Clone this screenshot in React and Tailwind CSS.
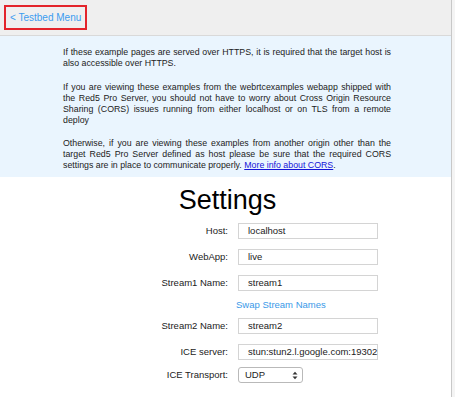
import React from "react";

const font = { fontFamily: '"Liberation Sans", Arial, sans-serif' };

function Row({ label, children }) {
  return (
    <div className="flex items-center h-[16px]">
      <div className="w-[238px] pr-[10px] text-right text-[9.5px] text-[#222]">{label}</div>
      {children}
    </div>
  );
}

function TextInput({ value }) {
  return (
    <div className="w-[140px] h-[16px] border border-[#d4d4d4] bg-white flex items-center pl-[9px] text-[9.5px] text-[#222]">
      {value}
    </div>
  );
}

export default function App() {
  return (
    <div className="w-[455px] h-[397px] flex bg-white overflow-hidden" style={font}>
      <div className="flex-1 flex flex-col">
        <div className="h-[36px] bg-[#efefef] border-b border-[#d9d9d9] flex items-center pl-[4px]">
          <div className="border-2 border-[#e3242b] h-[25px] px-[4px] flex items-center">
            <span className="text-[10px] text-[#3b9cf0]">&lt; Testbed Menu</span>
          </div>
        </div>
        <div className="bg-[#eaf5fe] h-[141px] pt-[11px] pl-[63px] pr-[60px] text-[8.8px] leading-[11px] text-[#222] text-justify">
          <p>If these example pages are served over HTTPS, it is required that the target host is also accessible over HTTPS.</p>
          <p className="mt-[12.5px]">
            If you are viewing these examples from the webrtcexamples webapp shipped with the Red5 Pro Server, you should not have to worry about Cross Origin Resource Sharing (CORS) issues running from either localhost or on TLS from a remote deploy
          </p>
          <p className="mt-[12.5px]">
            Otherwise, if you are viewing these examples from another origin other than the target Red5 Pro Server defined as host please be sure that the required CORS settings are in place to communicate properly.{" "}
            <span className="text-[#1414d8] underline">More info about CORS</span>.
          </p>
        </div>
        <div className="flex flex-col bg-white">
          <div className="text-center text-[27px] leading-[30px] text-black mt-[8px] pl-[4px]">Settings</div>
          <div className="flex flex-col mt-[8px] gap-[10px]">
            <Row label="Host:"><TextInput value="localhost" /></Row>
            <Row label="WebApp:"><TextInput value="live" /></Row>
            <Row label="Stream1 Name:"><TextInput value="stream1" /></Row>
          </div>
          <div className="pl-[236px] mt-[6px] h-[16px] text-[9.5px] text-[#3a99e8] flex items-center">Swap Stream Names</div>
          <div className="flex flex-col mt-[5px] gap-[10px]">
            <Row label="Stream2 Name:"><TextInput value="stream2" /></Row>
            <Row label="ICE server:"><TextInput value="stun:stun2.l.google.com:19302" /></Row>
          </div>
          <div className="mt-[7px]">
            <Row label="ICE Transport:">
              <div className="relative w-[65px] h-[16px] border border-[#b9b9b9] rounded-[3px] bg-white flex items-center pl-[6px] text-[9.5px] text-[#222]">
                UDP
                <svg className="absolute right-[4px] top-[3px]" width="6" height="9" viewBox="0 0 6 9">
                  <path d="M0.5 3.5 L3 0.8 L5.5 3.5 Z" fill="#333" />
                  <path d="M0.5 5.5 L3 8.2 L5.5 5.5 Z" fill="#333" />
                </svg>
              </div>
            </Row>
          </div>
        </div>
      </div>
      <div className="w-[4px] border-l border-[#c8c8c8] bg-[#f4f4f4]"></div>
    </div>
  );
}
